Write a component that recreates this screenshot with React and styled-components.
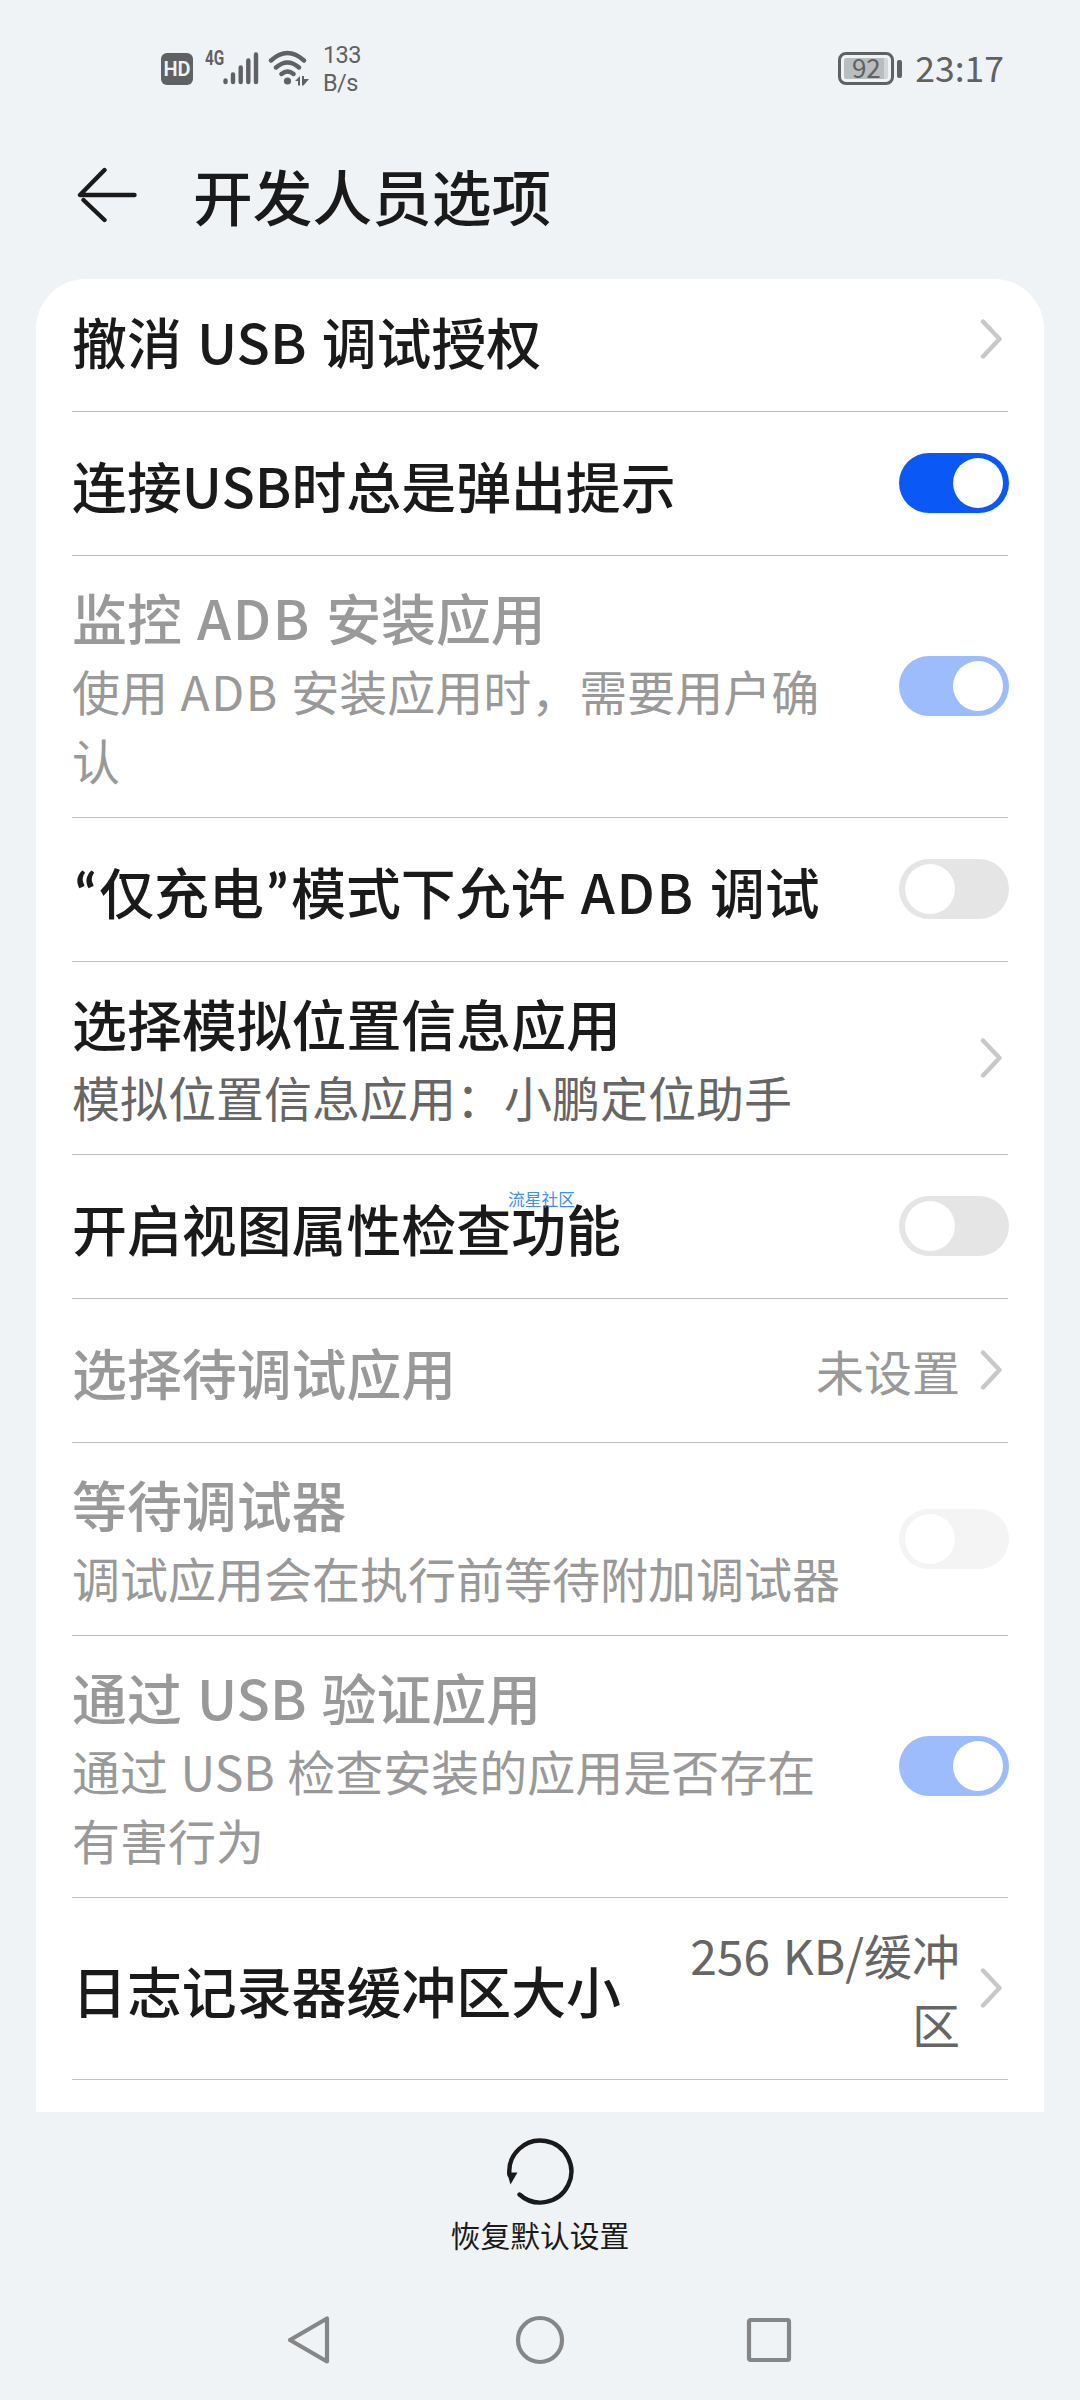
import React from "react";
import styled, { createGlobalStyle, css } from "styled-components";

const settings = [
  { title: "撤消 USB 调试授权", type: "link" },
  { title: "连接USB时总是弹出提示", type: "switch", on: true },
  {
    title: "监控 ADB 安装应用",
    summary: "使用 ADB 安装应用时，需要用户确认",
    type: "switch",
    on: true,
    disabled: true,
    height: 262,
  },
  { title: "“仅充电”模式下允许 ADB 调试", type: "switch" },
  {
    title: "选择模拟位置信息应用",
    summary: "模拟位置信息应用：小鹏定位助手",
    type: "link",
    height: 193,
  },
  { title: "开启视图属性检查功能", type: "switch" },
  { title: "选择待调试应用", type: "link", value: "未设置", disabled: true },
  {
    title: "等待调试器",
    summary: "调试应用会在执行前等待附加调试器",
    type: "switch",
    disabled: true,
    height: 193,
  },
  {
    title: "通过 USB 验证应用",
    summary: "通过 USB 检查安装的应用是否存在有害行为",
    type: "switch",
    on: true,
    disabled: true,
    height: 262,
  },
  {
    title: "日志记录器缓冲区大小",
    type: "link",
    value: "256 KB/缓冲区",
    height: 182,
  },
];

// curly quotes are full width in the CJK font and ADB is set too tight
function renderText(text) {
  return text.split(/([“”]|ADB)/).map((part, i) => {
    if (part === "“" || part === "”") {
      return <Quote key={i}>{part}</Quote>;
    }
    if (part === "ADB") {
      return <Spaced key={i}>{part}</Spaced>;
    }
    return part;
  });
}

function SettingRow({ title, summary, value, type, on, disabled, height }) {
  return (
    <Row $height={height}>
      <RowText>
        <RowTitle $disabled={disabled}>{renderText(title)}</RowTitle>
        {summary && (
          <Summary $disabled={disabled}>{renderText(summary)}</Summary>
        )}
      </RowText>
      {value && <Value $disabled={disabled}>{value}</Value>}
      {type === "switch" ? (
        <Switch $on={on} $disabled={disabled}>
          <Thumb />
        </Switch>
      ) : (
        <Chevron viewBox="0 0 22 40">
          <path d="M3 2.5 L19.5 20 L3 37.5" />
        </Chevron>
      )}
    </Row>
  );
}

function StatusBar() {
  return (
    <StatusWrapper>
      <HdBadge>HD</HdBadge>
      <NetworkType>4G</NetworkType>
      <SignalIcon viewBox="0 0 36 34">
        <path d="M2.5 29.5V31M10 23.5V31M17.7 16.5V31M25.3 9.5V31M33 3.5V31" />
      </SignalIcon>
      <WifiIcon viewBox="0 0 42 36">
        <path d="M3 10.5Q19.5 -4.5 36 10.5M8 17.5Q19.5 7.5 31 17.5M13.5 24Q19.5 19 25.5 24" />
        <circle cx="19.5" cy="31" r="3.6" />
        <polygon points="27,31 32,26 32,35.5 30,35.5 30,31" />
        <polygon points="34,26 36,26 36,29 41,29 35.5,35.5 34,35.5" />
      </WifiIcon>
      <Speed>
        <span>133</span>
        <span>B/s</span>
      </Speed>
      <Battery>
        <BatteryLevel>92</BatteryLevel>
      </Battery>
      <BatteryCap />
      <Clock>23:17</Clock>
    </StatusWrapper>
  );
}

function App() {
  return (
    <>
      <GlobalStyle />
      <Screen>
        <StatusBar />
        <Header>
          <BackIcon viewBox="0 0 60 56">
            <path d="M27.5 3 L3 28 H57.5M27.5 53 L6.5 33" />
          </BackIcon>
          <PageTitle>开发人员选项</PageTitle>
        </Header>
        <Card>
          <List>
            {settings.map((item) => (
              <SettingRow key={item.title} {...item} />
            ))}
          </List>
        </Card>
        <Footer>
          <ResetIcon viewBox="0 0 68 68">
            <path d="M3.5 37 A31 31 0 1 1 13.5 56.5" />
            <polygon points="1,34.5 11.5,34.5 4.5,46.5" />
          </ResetIcon>
          <FooterLabel>恢复默认设置</FooterLabel>
        </Footer>
        <NavBar>
          <NavIcon viewBox="0 0 50 50">
            <path d="M41 3.5 V46.5 L4 25 Z" />
          </NavIcon>
          <NavIcon viewBox="0 0 50 50">
            <circle cx="25" cy="25" r="22" />
          </NavIcon>
          <NavIcon viewBox="0 0 50 50">
            <rect x="5" y="5" width="40" height="40" rx="1.5" />
          </NavIcon>
        </NavBar>
        <Watermark>流星社区</Watermark>
      </Screen>
    </>
  );
}

export default App;

const GlobalStyle = createGlobalStyle`
  body {
    margin: 0;
    background: #f0f3f6;
    font-family: "Noto Sans CJK SC", sans-serif;
  }

  * {
    box-sizing: border-box;
  }
`;

const stroke = css`
  fill: none;
  stroke-linecap: round;
  stroke-linejoin: round;
`;

const Screen = styled.div`
  position: relative;
  display: flex;
  flex-direction: column;
  width: 1080px;
  height: 2400px;
  overflow: hidden;
  background: #f0f3f6;
`;

const StatusWrapper = styled.div`
  display: flex;
  align-items: center;
  height: 137px;
  padding: 0 76px 0 161px;
  color: #5f6163;
`;

const HdBadge = styled.div`
  width: 32px;
  height: 32px;
  border-radius: 6px;
  background: #5f6163;
  color: #f0f3f6;
  font: 600 20px/33px Roboto, sans-serif;
  text-align: center;
`;

const NetworkType = styled.div`
  width: 18px;
  margin: -21px 0 0 12px;
  font: 700 21px/20px Roboto, sans-serif;
  transform: scaleX(0.73);
  transform-origin: left;
`;

const SignalIcon = styled.svg`
  ${stroke}
  width: 36px;
  height: 34px;
  margin-top: -1px;
  stroke: #5f6163;
  stroke-width: 4.4;
`;

const WifiIcon = styled.svg`
  width: 42px;
  height: 36px;
  margin: -2px 0 0 9px;
  fill: #5f6163;

  path {
    ${stroke}
    stroke: #5f6163;
    stroke-width: 4.4;
  }
`;

const Speed = styled.div`
  display: flex;
  flex-direction: column;
  margin-left: 13px;
  font: 400 23.5px/28px Roboto, sans-serif;
  letter-spacing: -0.6px;
`;

const Battery = styled.div`
  width: 56px;
  height: 33px;
  margin-left: auto;
  padding: 3px;
  border: 3px solid #5f6163;
  border-radius: 8px;
`;

const BatteryLevel = styled.div`
  height: 21px;
  border-radius: 2px;
  background: linear-gradient(to right, #b9bdbd 92%, #d3d6d7 92%);
  font-size: 26px;
  line-height: 18px;
  text-align: center;
`;

const BatteryCap = styled.div`
  width: 5px;
  height: 18px;
  margin-left: 3px;
  border-radius: 2px;
  background: #5f6163;
`;

const Clock = styled.div`
  margin: -3px 0 0 13px;
  font-size: 35.5px;
  line-height: 40px;
`;

const Header = styled.header`
  display: flex;
  align-items: center;
  height: 142px;
  padding: 0 0 26px 77px;
`;

const BackIcon = styled.svg`
  ${stroke}
  width: 60px;
  height: 56px;
  stroke: #1a1a1a;
  stroke-width: 4.4;
`;

const PageTitle = styled.h1`
  margin: 0 0 0 56px;
  color: #1a1a1a;
  font-size: 59.7px;
  font-weight: 500;
  line-height: 80px;
`;

const Card = styled.main`
  height: 1833px;
  margin: 0 36px;
  padding: 0 36px;
  overflow: hidden;
  border-radius: 50px 50px 0 0;
  background: #fff;
`;

// the first row is scrolled a little under the card edge
const List = styled.div`
  margin-top: -11px;
`;

const Row = styled.div`
  display: flex;
  align-items: center;
  height: ${(props) => props.$height || 144}px;
  border-bottom: 1px solid #c2c2c2;
`;

const RowText = styled.div`
  flex: 1;
  min-width: 0;
`;

const RowTitle = styled.div`
  color: ${(props) => (props.$disabled ? "#999" : "#1a1a1a")};
  font-size: 54.9px;
  font-weight: 500;
  line-height: 72px;
  word-spacing: 2.8px;
  white-space: nowrap;
`;

const Quote = styled.span`
  display: inline-block;
  width: 27.2px;
  font-family: Lato, sans-serif;
  font-weight: 700;
  line-height: 1;
  text-align: center;
`;

const Spaced = styled.span`
  letter-spacing: 0.03em;
`;

const Summary = styled.div`
  margin-top: 4px;
  color: ${(props) => (props.$disabled ? "#999" : "#666")};
  font-size: 48px;
  line-height: 68.5px;
  word-spacing: 1.8px;
`;

const Value = styled.div`
  max-width: 280px;
  margin-right: 20px;
  color: ${(props) => (props.$disabled ? "#999" : "#666")};
  font-size: 48px;
  line-height: 68.5px;
  text-align: right;
  word-spacing: 1.8px;
`;

const Chevron = styled.svg`
  ${stroke}
  flex: none;
  width: 22px;
  height: 40px;
  margin: 0 6px 1px 0;
  stroke: #c8c8c8;
  stroke-width: 4.4;
`;

const Switch = styled.div`
  display: flex;
  flex: none;
  justify-content: ${(props) => (props.$on ? "flex-end" : "flex-start")};
  width: 110px;
  height: 60px;
  margin: 0 -1px 1px 48px;
  padding: 5px 6px;
  border-radius: 30px;
  background: ${(props) => (props.$on ? "#0a59f7" : "#e5e5e5")};
  opacity: ${(props) => (props.$disabled ? 0.4 : 1)};
`;

const Thumb = styled.div`
  width: 50px;
  height: 50px;
  border-radius: 50%;
  background: #fff;
`;

const Footer = styled.footer`
  display: flex;
  flex-direction: column;
  align-items: center;
  height: 178px;
  padding-top: 26px;
`;

const ResetIcon = styled.svg`
  width: 68px;
  height: 68px;
  fill: #1a1a1a;

  path {
    ${stroke}
    stroke: #1a1a1a;
    stroke-width: 4.4;
  }
`;

const FooterLabel = styled.div`
  margin-top: 8px;
  color: #1a1a1a;
  font-size: 29.8px;
  line-height: 40px;
`;

const NavBar = styled.nav`
  display: flex;
  justify-content: space-between;
  padding: 25px 286px 0;
`;

const NavIcon = styled.svg`
  ${stroke}
  width: 50px;
  height: 50px;
  stroke: #868686;
  stroke-width: 4.2;
`;

const Watermark = styled.div`
  position: absolute;
  top: 1187px;
  left: 508px;
  color: #3d93e8;
  font-size: 16.8px;
  line-height: 24px;
`;
